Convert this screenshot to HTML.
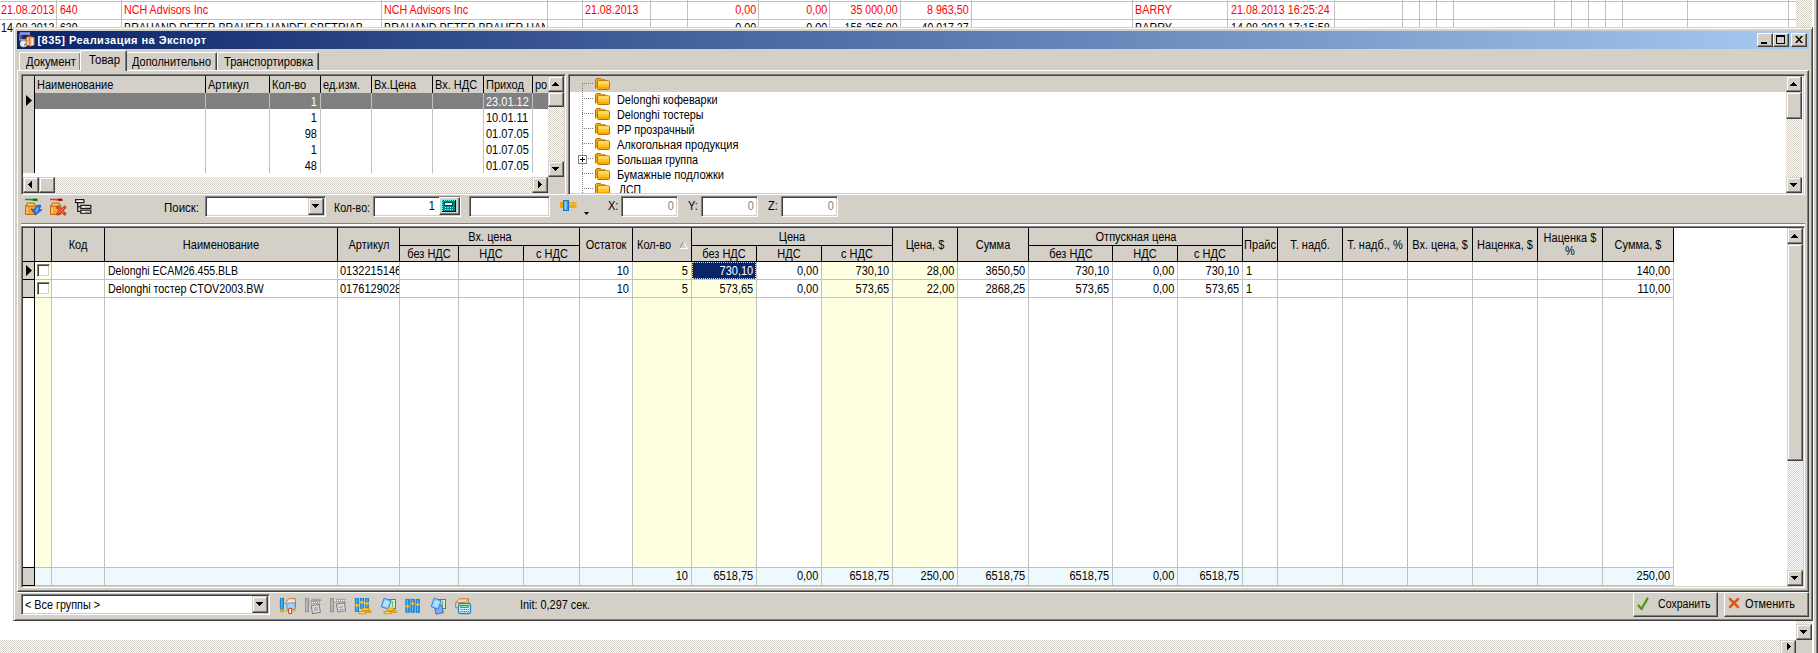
<!DOCTYPE html>
<html lang="ru"><head><meta charset="utf-8"><title>[835] Реализация на Экспорт</title>
<style>
html,body{margin:0;padding:0}
body{width:1818px;height:653px;overflow:hidden;background:#fff;position:relative;font-family:"Liberation Sans",sans-serif;font-size:11px;color:#000}
div{position:absolute;box-sizing:border-box}
svg{position:absolute;overflow:visible}
.t{white-space:nowrap;font-size:12.5px;line-height:12px;height:12px}
.chk{background:repeating-conic-gradient(#fff 0% 25%,#d4d0c8 0% 50%) 0 0/2px 2px}
.face{background:#d4d0c8}
.sunk{border:1px solid;border-color:#808080 #fff #fff #808080;box-shadow:inset 1px 1px 0 #404040,inset -1px -1px 0 #d4d0c8}
.btn{background:#d4d0c8;border:1px solid;border-color:#fff #404040 #404040 #fff;box-shadow:inset -1px -1px 0 #808080,inset 1px 1px 0 #d4d0c8}
.sbtn{background:#d4d0c8;border:1px solid;border-color:#d4d0c8 #404040 #404040 #d4d0c8;box-shadow:inset -1px -1px 0 #808080,inset 1px 1px 0 #fff}
.hd{background:#d4d0c8;border-right:1px solid #000}
.clip{overflow:hidden}
</style></head><body>

<div style="left:0px;top:1px;width:1796px;height:1px;background:#c0c0c0"></div>
<div style="left:0px;top:19px;width:1796px;height:1px;background:#c0c0c0"></div>
<div style="left:56px;top:0px;width:1px;height:28px;background:#c0c0c0"></div>
<div style="left:121px;top:0px;width:1px;height:28px;background:#c0c0c0"></div>
<div style="left:381px;top:0px;width:1px;height:28px;background:#c0c0c0"></div>
<div style="left:547px;top:0px;width:1px;height:28px;background:#c0c0c0"></div>
<div style="left:582px;top:0px;width:1px;height:28px;background:#c0c0c0"></div>
<div style="left:650px;top:0px;width:1px;height:28px;background:#c0c0c0"></div>
<div style="left:687px;top:0px;width:1px;height:28px;background:#c0c0c0"></div>
<div style="left:758px;top:0px;width:1px;height:28px;background:#c0c0c0"></div>
<div style="left:829px;top:0px;width:1px;height:28px;background:#c0c0c0"></div>
<div style="left:900px;top:0px;width:1px;height:28px;background:#c0c0c0"></div>
<div style="left:971px;top:0px;width:1px;height:28px;background:#c0c0c0"></div>
<div style="left:1132px;top:0px;width:1px;height:28px;background:#c0c0c0"></div>
<div style="left:1227px;top:0px;width:1px;height:28px;background:#c0c0c0"></div>
<div style="left:1334px;top:0px;width:1px;height:28px;background:#c0c0c0"></div>
<div style="left:1402px;top:0px;width:1px;height:28px;background:#c0c0c0"></div>
<div style="left:1419px;top:0px;width:1px;height:28px;background:#c0c0c0"></div>
<div style="left:1436px;top:0px;width:1px;height:28px;background:#c0c0c0"></div>
<div style="left:1453px;top:0px;width:1px;height:28px;background:#c0c0c0"></div>
<div style="left:1554px;top:0px;width:1px;height:28px;background:#c0c0c0"></div>
<div style="left:1571px;top:0px;width:1px;height:28px;background:#c0c0c0"></div>
<div style="left:1588px;top:0px;width:1px;height:28px;background:#c0c0c0"></div>
<div style="left:1605px;top:0px;width:1px;height:28px;background:#c0c0c0"></div>
<div style="left:1622px;top:0px;width:1px;height:28px;background:#c0c0c0"></div>
<div style="left:1687px;top:0px;width:1px;height:28px;background:#c0c0c0"></div>
<div style="left:1788px;top:0px;width:1px;height:28px;background:#c0c0c0"></div>
<div class="t" style="font-size:12.5px;line-height:15px;height:15px;top:3px;transform:scaleX(0.8552);color:#ff0000;left:0.5px;transform-origin:0 0;">21.08.2013</div>
<div class="t" style="font-size:12.5px;line-height:15px;height:15px;top:3px;transform:scaleX(0.8440);color:#ff0000;left:59.5px;transform-origin:0 0;">640</div>
<div class="t" style="font-size:12.5px;line-height:15px;height:15px;top:3px;transform:scaleX(0.8576);color:#ff0000;left:124px;transform-origin:0 0;">NCH Advisors Inc</div>
<div class="t" style="font-size:12.5px;line-height:15px;height:15px;top:3px;transform:scaleX(0.8576);color:#ff0000;left:384px;transform-origin:0 0;">NCH Advisors Inc</div>
<div class="t" style="font-size:12.5px;line-height:15px;height:15px;top:3px;transform:scaleX(0.8552);color:#ff0000;left:585px;transform-origin:0 0;">21.08.2013</div>
<div class="t" style="font-size:12.5px;line-height:15px;height:15px;top:3px;transform:scaleX(0.8632);color:#ff0000;right:1062px;transform-origin:100% 0;">0,00</div>
<div class="t" style="font-size:12.5px;line-height:15px;height:15px;top:3px;transform:scaleX(0.8632);color:#ff0000;right:991px;transform-origin:100% 0;">0,00</div>
<div class="t" style="font-size:12.5px;line-height:15px;height:15px;top:3px;transform:scaleX(0.8452);color:#ff0000;right:920.5px;transform-origin:100% 0;">35 000,00</div>
<div class="t" style="font-size:12.5px;line-height:15px;height:15px;top:3px;transform:scaleX(0.8571);color:#ff0000;right:849.5px;transform-origin:100% 0;">8 963,50</div>
<div class="t" style="font-size:12.5px;line-height:15px;height:15px;top:3px;transform:scaleX(0.8636);color:#ff0000;left:1135px;transform-origin:0 0;">BARRY</div>
<div class="t" style="font-size:12.5px;line-height:15px;height:15px;top:3px;transform:scaleX(0.8606);color:#ff0000;left:1230.5px;transform-origin:0 0;">21.08.2013 16:25:24</div>
<div class="clip" style="left:0;top:20px;width:1796px;height:20px">
<div class="t" style="font-size:12.5px;line-height:15px;height:15px;top:1px;transform:scaleX(0.8552);left:0.5px;transform-origin:0 0;">14.08.2013</div>
<div class="t" style="font-size:12.5px;line-height:15px;height:15px;top:1px;transform:scaleX(0.8440);left:59.5px;transform-origin:0 0;">639</div>
<div class="clip" style="left:124px;top:0;width:256px;height:20px">
<div class="t" style="font-size:12.5px;line-height:15px;height:15px;top:1px;transform:scaleX(0.8602);left:0px;transform-origin:0 0;">BRAHAND PETER BRAHER HANDELSBETRIAB</div>
</div>
<div class="clip" style="left:384px;top:0;width:161px;height:20px">
<div class="t" style="font-size:12.5px;line-height:15px;height:15px;top:1px;transform:scaleX(0.8602);left:0px;transform-origin:0 0;">BRAHAND PETER BRAHER HANDELSBETRIAB</div>
</div>
<div class="t" style="font-size:12.5px;line-height:15px;height:15px;top:1px;transform:scaleX(0.8632);right:1040px;transform-origin:100% 0;">0,00</div>
<div class="t" style="font-size:12.5px;line-height:15px;height:15px;top:1px;transform:scaleX(0.8632);right:969px;transform-origin:100% 0;">0,00</div>
<div class="t" style="font-size:12.5px;line-height:15px;height:15px;top:1px;transform:scaleX(0.8472);right:898.5px;transform-origin:100% 0;">156 256,00</div>
<div class="t" style="font-size:12.5px;line-height:15px;height:15px;top:1px;transform:scaleX(0.8452);right:827.5px;transform-origin:100% 0;">40 017,27</div>
<div class="t" style="font-size:12.5px;line-height:15px;height:15px;top:1px;transform:scaleX(0.8636);left:1135px;transform-origin:0 0;">BARRY</div>
<div class="t" style="font-size:12.5px;line-height:15px;height:15px;top:1px;transform:scaleX(0.8606);left:1230.5px;transform-origin:0 0;">14.08.2013 17:15:58</div>
</div>
<div class="chk" style="left:1796px;top:0px;width:16px;height:640px;"></div>
<div class="sbtn" style="left:1796px;top:624px;width:16px;height:16px;"></div>
<svg style="left:1800px;top:630px" width="7" height="4"><path d="M0 0h7v1h-1v1h-1v1h-1v1h-1v-1h-1v-1h-1v-1h-1z" fill="#000" shape-rendering="crispEdges"/></svg>
<div class="chk" style="left:0px;top:640px;width:1796px;height:13px;"></div>
<div class="sbtn" style="left:1780px;top:640px;width:16px;height:16px;"></div>
<svg style="left:1787px;top:643px" width="4" height="7"><path d="M0 0h1v1h1v1h1v1h1v1h-1v1h-1v1h-1v1h-1z" fill="#000" shape-rendering="crispEdges"/></svg>
<div class="face" style="left:1796px;top:640px;width:16px;height:13px;"></div>
<div style="left:1812px;top:0px;width:2px;height:653px;background:#fff"></div>
<div style="left:1814px;top:0px;width:2px;height:653px;background:#d4d0c8"></div>
<div style="left:1816px;top:0px;width:1px;height:653px;background:#808080"></div>
<div style="left:1817px;top:0px;width:1px;height:653px;background:#404040"></div>
<div style="left:13px;top:27px;width:1800px;height:594px;background:#d4d0c8;border:1px solid;border-color:#d4d0c8 #404040 #404040 #d4d0c8;box-shadow:inset 1px 1px 0 #fff,inset -1px -1px 0 #808080"></div>
<div style="left:17px;top:31px;width:1792px;height:18px;background:linear-gradient(90deg,#0a246a,#a6caf0)"></div>
<svg style="left:19px;top:32px" width="16" height="16" viewBox="0 0 16 16"><rect x=".5" y="2.500" width="9.500" height="6" fill="#14246c" stroke="#7c8498" stroke-width=".8"/><rect x=".8" y=".2" width="10.200" height="2.500" fill="#8896f0"/><rect x="7.200" y=".8" width="1.400" height="1.200" fill="#58d060"/><path d="M1.300 3v5M2.800 3v5" stroke="#70788c" stroke-width=".8"/><path d="M.5 7.600h7" stroke="#d8a0a8" stroke-width=".9"/><ellipse cx="4.600" cy="11.800" rx="3.600" ry="3.300" fill="#e8eaee" stroke="#a8acb8" stroke-width=".6"/><path d="M3 10.500l1.200 2.800M5.500 13.500l1.800-1.800" stroke="#fff" stroke-width="1"/><path d="M5.200 13.200l2-1.600" stroke="#3a6cd8" stroke-width="1.100"/><path d="M7.200 5.300L11 4.200l4.200 1.100V13L11 14.300 7.200 13z" fill="#ee8c34" stroke="#b85e10" stroke-width=".5"/><path d="M11 4.200v10.100" stroke="#c06818" stroke-width=".5"/><path d="M11.200 5.200l4 .9V13l-4 1.200z" fill="#f6a860"/><path d="M8.900 6v6.800" stroke="#fff" stroke-width="1.200"/><path d="M13.200 6.200v6.800" stroke="#fff4e4" stroke-width="1.600"/><path d="M9 7.500v3" stroke="#8088a8" stroke-width=".8"/></svg>
<div class="t" style="top:33.5px;color:#fff;font-size:11px;line-height:13px;height:13px;font-weight:bold;letter-spacing:0.457px;left:37.5px;">[835] Реализация на Экспорт</div>
<div class="btn" style="left:1757px;top:33px;width:16px;height:14px;"></div>
<div class="btn" style="left:1773px;top:33px;width:16px;height:14px;"></div>
<div class="btn" style="left:1791px;top:33px;width:16px;height:14px;"></div>
<div style="left:1761px;top:42px;width:6px;height:2px;background:#000"></div>
<div style="left:1776px;top:35px;width:9px;height:9px;border:1px solid #000;border-top-width:2px"></div>
<svg style="left:1795px;top:36px" width="8" height="7"><path d="M0 0h2l2 2.5L6 0h2L5 3.5 8 7H6L4 4.5 2 7H0l3-3.5z" fill="#000"/></svg>
<div style="left:17px;top:70px;width:1792px;height:522px;background:#d4d0c8;border:1px solid;border-color:#fff #404040 #404040 #fff;box-shadow:inset -1px -1px 0 #808080"></div>
<div style="left:19px;top:52px;width:62px;height:18px;background:#d4d0c8;border:1px solid;border-color:#fff #404040 #d4d0c8 #fff;border-bottom:0;border-radius:2px 2px 0 0;box-shadow:inset -1px 0 0 #808080"></div>
<div class="t" style="top:56px;transform:scaleX(0.9017);left:26px;transform-origin:0 0;">Документ</div>
<div style="left:125px;top:52px;width:92px;height:18px;background:#d4d0c8;border:1px solid;border-color:#fff #404040 #d4d0c8 #fff;border-bottom:0;border-radius:2px 2px 0 0;box-shadow:inset -1px 0 0 #808080"></div>
<div class="t" style="top:56px;transform:scaleX(0.8781);left:132px;transform-origin:0 0;">Дополнительно</div>
<div style="left:217px;top:52px;width:102px;height:18px;background:#d4d0c8;border:1px solid;border-color:#fff #404040 #d4d0c8 #fff;border-bottom:0;border-radius:2px 2px 0 0;box-shadow:inset -1px 0 0 #808080"></div>
<div class="t" style="top:56px;transform:scaleX(0.8900);left:224px;transform-origin:0 0;">Транспортировка</div>
<div style="left:80px;top:50px;width:47px;height:21px;background:#d4d0c8;border:1px solid;border-color:#fff #404040 #d4d0c8 #fff;border-bottom:0;border-radius:2px 2px 0 0;box-shadow:inset -1px 0 0 #808080"></div>
<div class="t" style="top:54px;transform:scaleX(0.9114);left:89px;transform-origin:0 0;">Товар</div>
<div class="sunk" style="left:21px;top:74px;width:545px;height:121px;background:#fff"></div>
<div style="left:23px;top:76px;width:525px;height:17px;background:#d4d0c8"></div>
<div style="left:34px;top:76px;width:1px;height:17px;background:#000"></div>
<div style="left:34px;top:93px;width:1px;height:80px;background:#c0c0c0"></div>
<div style="left:205px;top:76px;width:1px;height:17px;background:#000"></div>
<div style="left:205px;top:93px;width:1px;height:80px;background:#c0c0c0"></div>
<div style="left:269px;top:76px;width:1px;height:17px;background:#000"></div>
<div style="left:269px;top:93px;width:1px;height:80px;background:#c0c0c0"></div>
<div style="left:320px;top:76px;width:1px;height:17px;background:#000"></div>
<div style="left:320px;top:93px;width:1px;height:80px;background:#c0c0c0"></div>
<div style="left:371px;top:76px;width:1px;height:17px;background:#000"></div>
<div style="left:371px;top:93px;width:1px;height:80px;background:#c0c0c0"></div>
<div style="left:432px;top:76px;width:1px;height:17px;background:#000"></div>
<div style="left:432px;top:93px;width:1px;height:80px;background:#c0c0c0"></div>
<div style="left:483px;top:76px;width:1px;height:17px;background:#000"></div>
<div style="left:483px;top:93px;width:1px;height:80px;background:#c0c0c0"></div>
<div style="left:532px;top:76px;width:1px;height:17px;background:#000"></div>
<div style="left:532px;top:93px;width:1px;height:80px;background:#c0c0c0"></div>
<div style="left:23px;top:93px;width:11px;height:80px;background:#d4d0c8"></div>
<div style="left:34px;top:93px;width:1px;height:80px;background:#000"></div>
<div class="t" style="top:79px;transform:scaleX(0.8800);left:37px;transform-origin:0 0;">Наименование</div>
<div class="t" style="top:79px;transform:scaleX(0.8800);left:208px;transform-origin:0 0;">Артикул</div>
<div class="t" style="top:79px;transform:scaleX(0.8800);left:272px;transform-origin:0 0;">Кол-во</div>
<div class="t" style="top:79px;transform:scaleX(0.8800);left:323px;transform-origin:0 0;">ед.изм.</div>
<div class="t" style="top:79px;transform:scaleX(0.8800);left:374px;transform-origin:0 0;">Вх.Цена</div>
<div class="t" style="top:79px;transform:scaleX(0.8800);left:435px;transform-origin:0 0;">Вх. НДС</div>
<div class="t" style="top:79px;transform:scaleX(0.8800);left:486px;transform-origin:0 0;">Приход</div>
<div class="t" style="top:79px;transform:scaleX(0.8800);left:535px;transform-origin:0 0;">ро</div>
<div style="left:35px;top:93px;width:513px;height:16px;background:#808080"></div>
<div style="left:205px;top:93px;width:1px;height:16px;background:#c0c0c0"></div>
<div style="left:269px;top:93px;width:1px;height:16px;background:#c0c0c0"></div>
<div style="left:320px;top:93px;width:1px;height:16px;background:#c0c0c0"></div>
<div style="left:371px;top:93px;width:1px;height:16px;background:#c0c0c0"></div>
<div style="left:432px;top:93px;width:1px;height:16px;background:#c0c0c0"></div>
<div style="left:483px;top:93px;width:1px;height:16px;background:#c0c0c0"></div>
<div style="left:532px;top:93px;width:1px;height:16px;background:#c0c0c0"></div>
<svg style="left:26px;top:95px" width="6" height="11"><path d="M0 0v11L6 5.5z" fill="#000"/></svg>
<div class="t" style="top:96px;color:#fff;transform:scaleX(0.8800);right:1501.5px;transform-origin:100% 0;">1</div>
<div class="t" style="top:96px;color:#fff;transform:scaleX(0.8800);left:486px;transform-origin:0 0;">23.01.12</div>
<div class="t" style="top:112px;transform:scaleX(0.8800);right:1501.5px;transform-origin:100% 0;">1</div>
<div class="t" style="top:112px;transform:scaleX(0.8800);left:486px;transform-origin:0 0;">10.01.11</div>
<div class="t" style="top:128px;transform:scaleX(0.8800);right:1501.5px;transform-origin:100% 0;">98</div>
<div class="t" style="top:128px;transform:scaleX(0.8800);left:486px;transform-origin:0 0;">01.07.05</div>
<div class="t" style="top:144px;transform:scaleX(0.8800);right:1501.5px;transform-origin:100% 0;">1</div>
<div class="t" style="top:144px;transform:scaleX(0.8800);left:486px;transform-origin:0 0;">01.07.05</div>
<div class="t" style="top:160px;transform:scaleX(0.8800);right:1501.5px;transform-origin:100% 0;">48</div>
<div class="t" style="top:160px;transform:scaleX(0.8800);left:486px;transform-origin:0 0;">01.07.05</div>
<div class="chk" style="left:548px;top:76px;width:16px;height:101px;"></div>
<div class="sbtn" style="left:548px;top:76px;width:16px;height:16px;"></div>
<svg style="left:552px;top:82px" width="7" height="4"><path d="M3 0h1v1h1v1h1v1h1v1h-7v-1h1v-1h1v-1h1z" fill="#000" shape-rendering="crispEdges"/></svg>
<div class="sbtn" style="left:548px;top:92px;width:16px;height:15px;"></div>
<div class="sbtn" style="left:548px;top:161px;width:16px;height:16px;"></div>
<svg style="left:552px;top:167px" width="7" height="4"><path d="M0 0h7v1h-1v1h-1v1h-1v1h-1v-1h-1v-1h-1v-1h-1z" fill="#000" shape-rendering="crispEdges"/></svg>
<div class="chk" style="left:23px;top:177px;width:525px;height:16px;"></div>
<div class="sbtn" style="left:23px;top:177px;width:16px;height:16px;"></div>
<svg style="left:28px;top:181px" width="4" height="7"><path d="M3 0h1v7h-1v-1h-1v-1h-1v-1h-1v-1h1v-1h1v-1h1z" fill="#000" shape-rendering="crispEdges"/></svg>
<div class="sbtn" style="left:39px;top:177px;width:16px;height:16px;"></div>
<div class="sbtn" style="left:532px;top:177px;width:16px;height:16px;"></div>
<svg style="left:538px;top:181px" width="4" height="7"><path d="M0 0h1v1h1v1h1v1h1v1h-1v1h-1v1h-1v1h-1z" fill="#000" shape-rendering="crispEdges"/></svg>
<div class="face" style="left:548px;top:177px;width:16px;height:16px;"></div>
<div class="sunk" style="left:568px;top:74px;width:1237px;height:121px;background:#fff"></div>
<div style="left:570px;top:76px;width:1217px;height:16px;background:#d4d0c8"></div>
<div class="clip" style="left:570px;top:76px;width:1217px;height:117px">
<div style="left:12px;top:7px;width:11px;height:1px;border-top:1px dotted #808080"></div>
<svg style="left:25px;top:2px" width="15" height="12" viewBox="0 0 15 12"><path d="M.5 10.500V1.500l1-1h4l1.200 1.300h3.300v2" fill="#f0a818" stroke="#b87400"/><rect x="2.500" y="2.800" width="12" height="8.700" rx="1" fill="#ffc420" stroke="#b87400"/><rect x="3" y="3.300" width="11" height="3" fill="#ffd45c"/><rect x="3" y="9" width="11" height="2" fill="#f6aa08"/><path d="M3.500 4h10" stroke="#ffe490" stroke-width=".8"/></svg>
<div style="left:12px;top:22px;width:11px;height:1px;border-top:1px dotted #808080"></div>
<svg style="left:25px;top:17px" width="15" height="12" viewBox="0 0 15 12"><path d="M.5 10.500V1.500l1-1h4l1.200 1.300h3.300v2" fill="#f0a818" stroke="#b87400"/><rect x="2.500" y="2.800" width="12" height="8.700" rx="1" fill="#ffc420" stroke="#b87400"/><rect x="3" y="3.300" width="11" height="3" fill="#ffd45c"/><rect x="3" y="9" width="11" height="2" fill="#f6aa08"/><path d="M3.500 4h10" stroke="#ffe490" stroke-width=".8"/></svg>
<div class="t" style="left:47px;top:18px;transform-origin:0 0;transform:scaleX(0.8704)">Delonghi кофеварки</div>
<div style="left:12px;top:37px;width:11px;height:1px;border-top:1px dotted #808080"></div>
<svg style="left:25px;top:32px" width="15" height="12" viewBox="0 0 15 12"><path d="M.5 10.500V1.500l1-1h4l1.200 1.300h3.300v2" fill="#f0a818" stroke="#b87400"/><rect x="2.500" y="2.800" width="12" height="8.700" rx="1" fill="#ffc420" stroke="#b87400"/><rect x="3" y="3.300" width="11" height="3" fill="#ffd45c"/><rect x="3" y="9" width="11" height="2" fill="#f6aa08"/><path d="M3.500 4h10" stroke="#ffe490" stroke-width=".8"/></svg>
<div class="t" style="left:47px;top:33px;transform-origin:0 0;transform:scaleX(0.8644)">Delonghi тостеры</div>
<div style="left:12px;top:52px;width:11px;height:1px;border-top:1px dotted #808080"></div>
<svg style="left:25px;top:47px" width="15" height="12" viewBox="0 0 15 12"><path d="M.5 10.500V1.500l1-1h4l1.200 1.300h3.300v2" fill="#f0a818" stroke="#b87400"/><rect x="2.500" y="2.800" width="12" height="8.700" rx="1" fill="#ffc420" stroke="#b87400"/><rect x="3" y="3.300" width="11" height="3" fill="#ffd45c"/><rect x="3" y="9" width="11" height="2" fill="#f6aa08"/><path d="M3.500 4h10" stroke="#ffe490" stroke-width=".8"/></svg>
<div class="t" style="left:47px;top:48px;transform-origin:0 0;transform:scaleX(0.8700)">PP прозрачный</div>
<div style="left:12px;top:67px;width:11px;height:1px;border-top:1px dotted #808080"></div>
<svg style="left:25px;top:62px" width="15" height="12" viewBox="0 0 15 12"><path d="M.5 10.500V1.500l1-1h4l1.200 1.300h3.300v2" fill="#f0a818" stroke="#b87400"/><rect x="2.500" y="2.800" width="12" height="8.700" rx="1" fill="#ffc420" stroke="#b87400"/><rect x="3" y="3.300" width="11" height="3" fill="#ffd45c"/><rect x="3" y="9" width="11" height="2" fill="#f6aa08"/><path d="M3.500 4h10" stroke="#ffe490" stroke-width=".8"/></svg>
<div class="t" style="left:47px;top:63px;transform-origin:0 0;transform:scaleX(0.8837)">Алкогольная продукция</div>
<div style="left:12px;top:82px;width:11px;height:1px;border-top:1px dotted #808080"></div>
<svg style="left:25px;top:77px" width="15" height="12" viewBox="0 0 15 12"><path d="M.5 10.500V1.500l1-1h4l1.200 1.300h3.300v2" fill="#f0a818" stroke="#b87400"/><rect x="2.500" y="2.800" width="12" height="8.700" rx="1" fill="#ffc420" stroke="#b87400"/><rect x="3" y="3.300" width="11" height="3" fill="#ffd45c"/><rect x="3" y="9" width="11" height="2" fill="#f6aa08"/><path d="M3.500 4h10" stroke="#ffe490" stroke-width=".8"/></svg>
<div class="t" style="left:47px;top:78px;transform-origin:0 0;transform:scaleX(0.8616)">Большая группа</div>
<div style="left:12px;top:97px;width:11px;height:1px;border-top:1px dotted #808080"></div>
<svg style="left:25px;top:92px" width="15" height="12" viewBox="0 0 15 12"><path d="M.5 10.500V1.500l1-1h4l1.200 1.300h3.300v2" fill="#f0a818" stroke="#b87400"/><rect x="2.500" y="2.800" width="12" height="8.700" rx="1" fill="#ffc420" stroke="#b87400"/><rect x="3" y="3.300" width="11" height="3" fill="#ffd45c"/><rect x="3" y="9" width="11" height="2" fill="#f6aa08"/><path d="M3.500 4h10" stroke="#ffe490" stroke-width=".8"/></svg>
<div class="t" style="left:47px;top:93px;transform-origin:0 0;transform:scaleX(0.8913)">Бумажные подложки</div>
<div style="left:12px;top:112px;width:11px;height:1px;border-top:1px dotted #808080"></div>
<svg style="left:25px;top:107px" width="15" height="12" viewBox="0 0 15 12"><path d="M.5 10.500V1.500l1-1h4l1.200 1.300h3.300v2" fill="#f0a818" stroke="#b87400"/><rect x="2.500" y="2.800" width="12" height="8.700" rx="1" fill="#ffc420" stroke="#b87400"/><rect x="3" y="3.300" width="11" height="3" fill="#ffd45c"/><rect x="3" y="9" width="11" height="2" fill="#f6aa08"/><path d="M3.500 4h10" stroke="#ffe490" stroke-width=".8"/></svg>
<div class="t" style="left:49px;top:108px;transform-origin:0 0;transform:scaleX(0.8309)">ДСП</div>
<div style="left:12px;top:7px;width:1px;height:112px;border-left:1px dotted #808080"></div>
<div style="left:8px;top:79px;width:9px;height:9px;background:#fff;border:1px solid #808080"></div>
<div style="left:10px;top:83px;width:5px;height:1px;background:#000"></div><div style="left:12px;top:81px;width:1px;height:5px;background:#000"></div>
</div>
<div class="chk" style="left:1786px;top:76px;width:16px;height:117px;"></div>
<div class="sbtn" style="left:1786px;top:76px;width:16px;height:16px;"></div>
<svg style="left:1790px;top:82px" width="7" height="4"><path d="M3 0h1v1h1v1h1v1h1v1h-7v-1h1v-1h1v-1h1z" fill="#000" shape-rendering="crispEdges"/></svg>
<div class="sbtn" style="left:1786px;top:92px;width:16px;height:27px;"></div>
<div class="sbtn" style="left:1786px;top:177px;width:16px;height:16px;"></div>
<svg style="left:1790px;top:183px" width="7" height="4"><path d="M0 0h7v1h-1v1h-1v1h-1v1h-1v-1h-1v-1h-1v-1h-1z" fill="#000" shape-rendering="crispEdges"/></svg>
<div class="t" style="top:202px;transform:scaleX(0.9184);left:164px;transform-origin:0 0;">Поиск:</div>
<div class="sunk" style="left:205px;top:196px;width:121px;height:21px;background:#fff"></div>
<div class="sbtn" style="left:308px;top:198px;width:16px;height:17px;"></div>
<svg style="left:312px;top:204px" width="7" height="4"><path d="M0 0h7v1h-1v1h-1v1h-1v1h-1v-1h-1v-1h-1v-1h-1z" fill="#000" shape-rendering="crispEdges"/></svg>
<div class="t" style="top:202px;transform:scaleX(0.8503);left:334px;transform-origin:0 0;">Кол-во:</div>
<div class="sunk" style="left:373px;top:196px;width:88px;height:21px;background:#fff"></div>
<div class="t" style="top:200px;transform:scaleX(0.8800);right:1383.5px;transform-origin:100% 0;">1</div>
<div class="btn" style="left:439px;top:197px;width:21px;height:18px;"></div>
<svg style="left:442px;top:200px" width="14" height="12" viewBox="0 0 14 12"><rect x="0" y="0" width="14" height="12" fill="#000070"/><rect x="0" y="0" width="13" height="11" fill="#008888"/><path d="M.5 11V.5H13" fill="none" stroke="#40ffff" stroke-width="1" stroke-dasharray="1 1"/><rect x="2.500" y="2.500" width="8" height="3" fill="#fff" stroke="#004848" stroke-width="1"/><path d="M3 7.500h8M3 9.500h8" stroke="#fff" stroke-width="1" stroke-dasharray="1 1.500"/></svg>
<div class="sunk" style="left:469px;top:196px;width:81px;height:21px;background:#fff"></div>
<svg style="left:560px;top:200px" width="17" height="11" viewBox="0 0 17 11"><rect x="0" y="2" width="3" height="6" fill="#f0a010"/><rect x="9" y="2" width="7.500" height="6" fill="#f0a818"/><rect x="10" y="3" width="5.500" height="2" fill="#f8d070"/><path d="M12 3v2M14 3v2" stroke="#c07800" stroke-width=".7"/><rect x="3.400" y=".4" width="5.200" height="10.200" fill="#2a9cea" stroke="#1466b8" stroke-width=".8"/><rect x="4.600" y="1.200" width="1.800" height="8.600" fill="#8fd6fa"/></svg>
<svg style="left:584px;top:212px" width="5" height="3"><path d="M0 0h5L2.5 3z" fill="#000"/></svg>
<div class="t" style="top:200px;transform:scaleX(0.8800);left:608px;transform-origin:0 0;">X:</div>
<div class="sunk" style="left:621px;top:196px;width:57px;height:21px;background:#fff"></div>
<div class="t" style="top:200px;color:#808080;transform:scaleX(0.8800);right:1144px;transform-origin:100% 0;">0</div>
<div class="t" style="top:200px;transform:scaleX(0.8800);left:688px;transform-origin:0 0;">Y:</div>
<div class="sunk" style="left:701px;top:196px;width:57px;height:21px;background:#fff"></div>
<div class="t" style="top:200px;color:#808080;transform:scaleX(0.8800);right:1064px;transform-origin:100% 0;">0</div>
<div class="t" style="top:200px;transform:scaleX(0.8800);left:768px;transform-origin:0 0;">Z:</div>
<div class="sunk" style="left:781px;top:196px;width:57px;height:21px;background:#fff"></div>
<div class="t" style="top:200px;color:#808080;transform:scaleX(0.8800);right:984px;transform-origin:100% 0;">0</div>
<svg style="left:24px;top:198px" width="18" height="18" viewBox="0 0 18 18"><path d="M1 .800h12.300v2.200L4.500 2.300H1z" fill="#169a16"/><path d="M13.300 .800v2.200L9 2.600V.800z" fill="#0a6a0a"/><path d="M1.500 8L3.500 5h6.500l2 3v8.500h-10.500z" fill="#f2a434" stroke="#c46c08" stroke-width="1"/><path d="M1.500 8h10.500" stroke="#c46c08" stroke-width=".8"/><path d="M3 9.500v6" stroke="#f9cf8c" stroke-width="1.200"/><path d="M4 6.500h5.500" stroke="#fbd9a0" stroke-width="1"/><path d="M13.500 7L17 7.500l-1.800 4 2.800.3L11.500 17 7 11l3.300.8z" fill="#2f6fe4" stroke="#1a48b4" stroke-width=".7"/><path d="M13.800 9.500l-1.600 4.500" stroke="#5ad0ff" stroke-width="1.600"/></svg>
<svg style="left:49px;top:198px" width="18" height="18" viewBox="0 0 18 18"><path d="M1 .800h12.300v2.200L4.500 2.300H1z" fill="#e03818"/><path d="M13.300 .800v2.200L9 2.600V.800z" fill="#8a1008"/><path d="M1.500 8L3.500 5h6.500l2 3v8.500h-10.500z" fill="#f2a434" stroke="#c46c08" stroke-width="1"/><path d="M1.500 8h10.500" stroke="#c46c08" stroke-width=".8"/><path d="M3 9.500v6" stroke="#f9cf8c" stroke-width="1.200"/><path d="M4 6.500h5.500" stroke="#fbd9a0" stroke-width="1"/><path d="M8.800 9.300l7 6.500M15.800 9.300l-7 6.500" stroke="#d43a22" stroke-width="3.200" stroke-linecap="round"/><path d="M9.300 9.800l6 5.500M15.300 9.800l-6 5.500" stroke="#f28a6a" stroke-width="1"/></svg>
<svg style="left:75px;top:199px" width="17" height="16" viewBox="0 0 17 16" fill="none" stroke="#1c1c1c" stroke-width="1.200"><rect x=".6" y=".6" width="8.300" height="3" fill="#fff"/><path d="M2.700 4v8.500h3M2.700 7.700h3"/><rect x="5.800" y="6.400" width="10" height="3" fill="#d8d8d8"/><rect x="5.800" y="11.200" width="10" height="3" fill="#d8d8d8"/><path d="M7 7.900h3M7 12.700h3" stroke="#fff" stroke-width="1.400"/></svg>
<div style="left:21px;top:223px;width:1784px;height:1px;background:#808080"></div>
<div style="left:21px;top:224px;width:1784px;height:2px;background:#fff"></div>
<div class="sunk" style="left:21px;top:226px;width:1784px;height:362px;background:#fff"></div>
<div style="left:35px;top:262px;width:16px;height:305px;background:#ffffe1"></div>
<div style="left:633px;top:262px;width:58px;height:305px;background:#ffffe1"></div>
<div style="left:692px;top:262px;width:64px;height:305px;background:#ffffe1"></div>
<div style="left:822px;top:262px;width:70px;height:305px;background:#ffffe1"></div>
<div style="left:893px;top:262px;width:64px;height:305px;background:#ffffe1"></div>
<div style="left:35px;top:568px;width:1638px;height:17px;background:#eef9fd"></div>
<div style="left:35px;top:585px;width:1639px;height:1px;background:#c0c0c0"></div>
<div style="left:51px;top:262px;width:1px;height:324px;background:#c0c0c0"></div>
<div style="left:104px;top:262px;width:1px;height:324px;background:#c0c0c0"></div>
<div style="left:337px;top:262px;width:1px;height:324px;background:#c0c0c0"></div>
<div style="left:399px;top:262px;width:1px;height:324px;background:#c0c0c0"></div>
<div style="left:458px;top:262px;width:1px;height:324px;background:#c0c0c0"></div>
<div style="left:523px;top:262px;width:1px;height:324px;background:#c0c0c0"></div>
<div style="left:579px;top:262px;width:1px;height:324px;background:#c0c0c0"></div>
<div style="left:632px;top:262px;width:1px;height:324px;background:#c0c0c0"></div>
<div style="left:691px;top:262px;width:1px;height:324px;background:#c0c0c0"></div>
<div style="left:756px;top:262px;width:1px;height:324px;background:#c0c0c0"></div>
<div style="left:821px;top:262px;width:1px;height:324px;background:#c0c0c0"></div>
<div style="left:892px;top:262px;width:1px;height:324px;background:#c0c0c0"></div>
<div style="left:957px;top:262px;width:1px;height:324px;background:#c0c0c0"></div>
<div style="left:1028px;top:262px;width:1px;height:324px;background:#c0c0c0"></div>
<div style="left:1112px;top:262px;width:1px;height:324px;background:#c0c0c0"></div>
<div style="left:1177px;top:262px;width:1px;height:324px;background:#c0c0c0"></div>
<div style="left:1242px;top:262px;width:1px;height:324px;background:#c0c0c0"></div>
<div style="left:1277px;top:262px;width:1px;height:324px;background:#c0c0c0"></div>
<div style="left:1342px;top:262px;width:1px;height:324px;background:#c0c0c0"></div>
<div style="left:1407px;top:262px;width:1px;height:324px;background:#c0c0c0"></div>
<div style="left:1472px;top:262px;width:1px;height:324px;background:#c0c0c0"></div>
<div style="left:1537px;top:262px;width:1px;height:324px;background:#c0c0c0"></div>
<div style="left:1602px;top:262px;width:1px;height:324px;background:#c0c0c0"></div>
<div style="left:1673px;top:262px;width:1px;height:324px;background:#c0c0c0"></div>
<div style="left:35px;top:279px;width:1639px;height:1px;background:#c0c0c0"></div>
<div style="left:35px;top:297px;width:1639px;height:1px;background:#c0c0c0"></div>
<div style="left:35px;top:567px;width:1639px;height:1px;background:#c0c0c0"></div>
<div style="left:23px;top:262px;width:11px;height:36px;background:#d4d0c8"></div>
<div style="left:23px;top:279px;width:11px;height:1px;background:#000"></div>
<div style="left:23px;top:297px;width:11px;height:1px;background:#000"></div>
<div style="left:34px;top:228px;width:1px;height:358px;background:#000"></div>
<div style="left:23px;top:567px;width:12px;height:19px;background:#d4d0c8;border:1px solid #000;border-left:0"></div>
<svg style="left:26px;top:265px" width="6" height="11"><path d="M0 0v11L6 5.5z" fill="#000"/></svg>
<div style="left:23px;top:228px;width:1651px;height:33px;background:#d4d0c8"></div>
<div style="left:23px;top:261px;width:1651px;height:1px;background:#000"></div>
<div style="left:34px;top:228px;width:1px;height:33px;background:#000"></div>
<div style="left:51px;top:228px;width:1px;height:33px;background:#000"></div>
<div style="left:104px;top:228px;width:1px;height:33px;background:#000"></div>
<div style="left:337px;top:228px;width:1px;height:33px;background:#000"></div>
<div style="left:399px;top:228px;width:1px;height:33px;background:#000"></div>
<div style="left:458px;top:228px;width:1px;height:33px;background:#000"></div>
<div style="left:523px;top:228px;width:1px;height:33px;background:#000"></div>
<div style="left:579px;top:228px;width:1px;height:33px;background:#000"></div>
<div style="left:632px;top:228px;width:1px;height:33px;background:#000"></div>
<div style="left:691px;top:228px;width:1px;height:33px;background:#000"></div>
<div style="left:756px;top:228px;width:1px;height:33px;background:#000"></div>
<div style="left:821px;top:228px;width:1px;height:33px;background:#000"></div>
<div style="left:892px;top:228px;width:1px;height:33px;background:#000"></div>
<div style="left:957px;top:228px;width:1px;height:33px;background:#000"></div>
<div style="left:1028px;top:228px;width:1px;height:33px;background:#000"></div>
<div style="left:1112px;top:228px;width:1px;height:33px;background:#000"></div>
<div style="left:1177px;top:228px;width:1px;height:33px;background:#000"></div>
<div style="left:1242px;top:228px;width:1px;height:33px;background:#000"></div>
<div style="left:1277px;top:228px;width:1px;height:33px;background:#000"></div>
<div style="left:1342px;top:228px;width:1px;height:33px;background:#000"></div>
<div style="left:1407px;top:228px;width:1px;height:33px;background:#000"></div>
<div style="left:1472px;top:228px;width:1px;height:33px;background:#000"></div>
<div style="left:1537px;top:228px;width:1px;height:33px;background:#000"></div>
<div style="left:1602px;top:228px;width:1px;height:33px;background:#000"></div>
<div style="left:1673px;top:228px;width:1px;height:33px;background:#000"></div>
<div style="left:400px;top:228px;width:179px;height:17px;background:#d4d0c8"></div>
<div style="left:400px;top:245px;width:179px;height:1px;background:#000"></div>
<div class="t" style="top:231px;transform:scaleX(0.8800);left:339.5px;width:300px;text-align:center;transform-origin:50% 0;">Вх. цена</div>
<div style="left:692px;top:228px;width:200px;height:17px;background:#d4d0c8"></div>
<div style="left:692px;top:245px;width:200px;height:1px;background:#000"></div>
<div class="t" style="top:231px;transform:scaleX(0.8800);left:642.0px;width:300px;text-align:center;transform-origin:50% 0;">Цена</div>
<div style="left:1029px;top:228px;width:213px;height:17px;background:#d4d0c8"></div>
<div style="left:1029px;top:245px;width:213px;height:1px;background:#000"></div>
<div class="t" style="top:231px;transform:scaleX(0.8800);left:985.5px;width:300px;text-align:center;transform-origin:50% 0;">Отпускная цена</div>
<div class="t" style="top:248px;transform:scaleX(0.8800);left:279.0px;width:300px;text-align:center;transform-origin:50% 0;">без НДС</div>
<div class="t" style="top:248px;transform:scaleX(0.8800);left:341.0px;width:300px;text-align:center;transform-origin:50% 0;">НДС</div>
<div class="t" style="top:248px;transform:scaleX(0.8800);left:401.5px;width:300px;text-align:center;transform-origin:50% 0;">с НДС</div>
<div class="t" style="top:248px;transform:scaleX(0.8800);left:574.0px;width:300px;text-align:center;transform-origin:50% 0;">без НДС</div>
<div class="t" style="top:248px;transform:scaleX(0.8800);left:639.0px;width:300px;text-align:center;transform-origin:50% 0;">НДС</div>
<div class="t" style="top:248px;transform:scaleX(0.8800);left:707.0px;width:300px;text-align:center;transform-origin:50% 0;">с НДС</div>
<div class="t" style="top:248px;transform:scaleX(0.8800);left:920.5px;width:300px;text-align:center;transform-origin:50% 0;">без НДС</div>
<div class="t" style="top:248px;transform:scaleX(0.8800);left:995.0px;width:300px;text-align:center;transform-origin:50% 0;">НДС</div>
<div class="t" style="top:248px;transform:scaleX(0.8800);left:1060.0px;width:300px;text-align:center;transform-origin:50% 0;">с НДС</div>
<div class="t" style="top:239px;transform:scaleX(0.8800);left:-72.0px;width:300px;text-align:center;transform-origin:50% 0;">Код</div>
<div class="t" style="top:239px;transform:scaleX(0.8800);left:71.0px;width:300px;text-align:center;transform-origin:50% 0;">Наименование</div>
<div class="t" style="top:239px;transform:scaleX(0.8800);left:218.5px;width:300px;text-align:center;transform-origin:50% 0;">Артикул</div>
<div class="t" style="top:239px;transform:scaleX(0.8800);left:456.0px;width:300px;text-align:center;transform-origin:50% 0;">Остаток</div>
<div class="t" style="top:239px;transform:scaleX(0.8800);left:775.0px;width:300px;text-align:center;transform-origin:50% 0;">Цена, $</div>
<div class="t" style="top:239px;transform:scaleX(0.8800);left:843.0px;width:300px;text-align:center;transform-origin:50% 0;">Сумма</div>
<div class="t" style="top:239px;transform:scaleX(0.8800);left:1110.0px;width:300px;text-align:center;transform-origin:50% 0;">Прайс</div>
<div class="t" style="top:239px;transform:scaleX(0.8800);left:1160.0px;width:300px;text-align:center;transform-origin:50% 0;">Т. надб.</div>
<div class="t" style="top:239px;transform:scaleX(0.8800);left:1225.0px;width:300px;text-align:center;transform-origin:50% 0;">Т. надб., %</div>
<div class="t" style="top:239px;transform:scaleX(0.8800);left:1290.0px;width:300px;text-align:center;transform-origin:50% 0;">Вх. цена, $</div>
<div class="t" style="top:239px;transform:scaleX(0.8800);left:1355.0px;width:300px;text-align:center;transform-origin:50% 0;">Наценка, $</div>
<div class="t" style="top:239px;transform:scaleX(0.8800);left:1488.0px;width:300px;text-align:center;transform-origin:50% 0;">Сумма, $</div>
<div class="t" style="top:239px;transform:scaleX(0.8800);left:637px;transform-origin:0 0;">Кол-во</div>
<svg style="left:679px;top:241px" width="9" height="8"><path d="M4.5 .5L.5 7.500h8z" fill="#d4d0c8" stroke="#fff"/><path d="M4.500 .5L.5 7.500" stroke="#808080" fill="none"/></svg>
<div class="t" style="top:232px;transform:scaleX(0.8800);left:1420.0px;width:300px;text-align:center;transform-origin:50% 0;">Наценка $</div>
<div class="t" style="top:245px;transform:scaleX(0.8800);left:1420.0px;width:300px;text-align:center;transform-origin:50% 0;">%</div>
<div class="sunk" style="left:37px;top:264px;width:13px;height:13px;background:#fff"></div>
<div class="sunk" style="left:37px;top:282px;width:13px;height:13px;background:#fff"></div>
<div style="left:692px;top:262px;width:64px;height:17px;background:#0a246a;border:1px dotted #f5db95"></div>
<div class="t" style="top:265px;transform:scaleX(0.8428);left:108px;transform-origin:0 0;">Delonghi ECAM26.455.BLB</div>
<div class="clip" style="left:338px;top:265px;width:61px;height:13px;"><div class="t" style="left:2px;top:0;transform-origin:0 0;transform:scaleX(0.8800)">0132215146</div></div>
<div class="t" style="top:265px;transform:scaleX(0.8800);right:1189px;transform-origin:100% 0;">10</div>
<div class="t" style="top:265px;transform:scaleX(0.8800);right:1130px;transform-origin:100% 0;">5</div>
<div class="t" style="top:265px;color:#fff;transform:scaleX(0.8800);right:1065px;transform-origin:100% 0;">730,10</div>
<div class="t" style="top:265px;transform:scaleX(0.8800);right:1000px;transform-origin:100% 0;">0,00</div>
<div class="t" style="top:265px;transform:scaleX(0.8800);right:929px;transform-origin:100% 0;">730,10</div>
<div class="t" style="top:265px;transform:scaleX(0.8800);right:864px;transform-origin:100% 0;">28,00</div>
<div class="t" style="top:265px;transform:scaleX(0.8800);right:793px;transform-origin:100% 0;">3650,50</div>
<div class="t" style="top:265px;transform:scaleX(0.8800);right:709px;transform-origin:100% 0;">730,10</div>
<div class="t" style="top:265px;transform:scaleX(0.8800);right:644px;transform-origin:100% 0;">0,00</div>
<div class="t" style="top:265px;transform:scaleX(0.8800);right:579px;transform-origin:100% 0;">730,10</div>
<div class="t" style="top:265px;transform:scaleX(0.8800);left:1245.5px;transform-origin:0 0;">1</div>
<div class="t" style="top:265px;transform:scaleX(0.8800);right:148px;transform-origin:100% 0;">140,00</div>
<div class="t" style="top:283px;transform:scaleX(0.8622);left:108px;transform-origin:0 0;">Delonghi тостер CTOV2003.BW</div>
<div class="clip" style="left:338px;top:283px;width:61px;height:13px;"><div class="t" style="left:2px;top:0;transform-origin:0 0;transform:scaleX(0.8800)">0176129028</div></div>
<div class="t" style="top:283px;transform:scaleX(0.8800);right:1189px;transform-origin:100% 0;">10</div>
<div class="t" style="top:283px;transform:scaleX(0.8800);right:1130px;transform-origin:100% 0;">5</div>
<div class="t" style="top:283px;transform:scaleX(0.8800);right:1065px;transform-origin:100% 0;">573,65</div>
<div class="t" style="top:283px;transform:scaleX(0.8800);right:1000px;transform-origin:100% 0;">0,00</div>
<div class="t" style="top:283px;transform:scaleX(0.8800);right:929px;transform-origin:100% 0;">573,65</div>
<div class="t" style="top:283px;transform:scaleX(0.8800);right:864px;transform-origin:100% 0;">22,00</div>
<div class="t" style="top:283px;transform:scaleX(0.8800);right:793px;transform-origin:100% 0;">2868,25</div>
<div class="t" style="top:283px;transform:scaleX(0.8800);right:709px;transform-origin:100% 0;">573,65</div>
<div class="t" style="top:283px;transform:scaleX(0.8800);right:644px;transform-origin:100% 0;">0,00</div>
<div class="t" style="top:283px;transform:scaleX(0.8800);right:579px;transform-origin:100% 0;">573,65</div>
<div class="t" style="top:283px;transform:scaleX(0.8800);left:1245.5px;transform-origin:0 0;">1</div>
<div class="t" style="top:283px;transform:scaleX(0.8800);right:148px;transform-origin:100% 0;">110,00</div>
<div class="t" style="top:570px;transform:scaleX(0.8800);right:1130px;transform-origin:100% 0;">10</div>
<div class="t" style="top:570px;transform:scaleX(0.8800);right:1065px;transform-origin:100% 0;">6518,75</div>
<div class="t" style="top:570px;transform:scaleX(0.8800);right:1000px;transform-origin:100% 0;">0,00</div>
<div class="t" style="top:570px;transform:scaleX(0.8800);right:929px;transform-origin:100% 0;">6518,75</div>
<div class="t" style="top:570px;transform:scaleX(0.8800);right:864px;transform-origin:100% 0;">250,00</div>
<div class="t" style="top:570px;transform:scaleX(0.8800);right:793px;transform-origin:100% 0;">6518,75</div>
<div class="t" style="top:570px;transform:scaleX(0.8800);right:709px;transform-origin:100% 0;">6518,75</div>
<div class="t" style="top:570px;transform:scaleX(0.8800);right:644px;transform-origin:100% 0;">0,00</div>
<div class="t" style="top:570px;transform:scaleX(0.8800);right:579px;transform-origin:100% 0;">6518,75</div>
<div class="t" style="top:570px;transform:scaleX(0.8800);right:148px;transform-origin:100% 0;">250,00</div>
<div class="chk" style="left:1787px;top:228px;width:16px;height:358px;"></div>
<div class="sbtn" style="left:1787px;top:228px;width:16px;height:16px;"></div>
<svg style="left:1791px;top:234px" width="7" height="4"><path d="M3 0h1v1h1v1h1v1h1v1h-7v-1h1v-1h1v-1h1z" fill="#000" shape-rendering="crispEdges"/></svg>
<div class="sbtn" style="left:1787px;top:244px;width:16px;height:217px;"></div>
<div class="sbtn" style="left:1787px;top:570px;width:16px;height:16px;"></div>
<svg style="left:1791px;top:576px" width="7" height="4"><path d="M0 0h7v1h-1v1h-1v1h-1v1h-1v-1h-1v-1h-1v-1h-1z" fill="#000" shape-rendering="crispEdges"/></svg>
<div style="left:17px;top:592px;width:1792px;height:1px;background:#fff"></div>
<div class="sunk" style="left:21px;top:594px;width:249px;height:21px;background:#fff"></div>
<div class="t" style="top:599px;transform:scaleX(0.8651);left:24.5px;transform-origin:0 0;">&lt; Все группы &gt;</div>
<div class="sbtn" style="left:252px;top:596px;width:16px;height:17px;"></div>
<svg style="left:256px;top:602px" width="7" height="4"><path d="M0 0h7v1h-1v1h-1v1h-1v1h-1v-1h-1v-1h-1v-1h-1z" fill="#000" shape-rendering="crispEdges"/></svg>
<div class="t" style="top:599px;transform:scaleX(0.8694);left:520px;transform-origin:0 0;">Init: 0,297 сек.</div>
<div class="btn" style="left:1633px;top:592px;width:85px;height:25px;"></div>
<div class="btn" style="left:1724px;top:592px;width:85px;height:25px;"></div>
<div class="t" style="top:598px;transform:scaleX(0.8468);left:1658px;transform-origin:0 0;">Сохранить</div>
<div class="t" style="top:598px;transform:scaleX(0.8754);left:1745px;transform-origin:0 0;">Отменить</div>
<svg style="left:1637px;top:597px" width="13" height="14" viewBox="0 0 13 14"><path d="M1.500 8.500L4.500 12 10.500 1.500" fill="none" stroke="#4a9a10" stroke-width="2.200" stroke-linecap="round" stroke-linejoin="round"/></svg>
<svg style="left:1728px;top:597px" width="12" height="12" viewBox="0 0 12 12"><path d="M2 2l8 8M10 2l-8 8" stroke="#e0581c" stroke-width="2.600" stroke-linecap="round"/></svg>
<svg style="left:280px;top:598px" width="16" height="16" viewBox="0 0 16 16"><rect x="0.2" y="0.2" width="3.500" height="11" fill="#1490e0" stroke="#0f6cbc" stroke-width=".6"/><rect x="1.2" y="0.7" width="1.200" height="10" fill="#4cc4f4"/><rect x="0" y="11.300" width="4" height="3" fill="#f0a010"/><path d="M5 6L8.500 .700h7v9" fill="#fbe3cc" stroke="#d07a28" stroke-width="1"/><rect x="6.800" y="5" width="8.200" height="6.500" fill="#a8d0f8" stroke="#4a90e0" stroke-width=".8" transform="rotate(-8 11 8)"/><path d="M4.500 12.800h3.500M12.500 12.800h3.500M12.500 10.800h3" stroke="#f0a010" stroke-width="1"/><rect x="8.700" y="10.300" width="3" height="5.400" rx="1.200" fill="#fff" stroke="#d03c10" stroke-width="1.100"/></svg>
<svg style="left:305px;top:598px" width="16" height="16" viewBox="0 0 16 16"><rect x=".3" y=".5" width="3.400" height="13.500" fill="#9a9a9a" stroke="#787878" stroke-width=".5"/><rect x="1.200" y="1" width="1.300" height="12.500" fill="#c4c4c4"/><path d="M4.300 4L7 .700h8.800V6H4.300z" fill="#a4a4a4"/><path d="M5 4.5h11" stroke="#fff" stroke-width="1" stroke-dasharray="1 1"/><g transform="rotate(-9 11 11)"><rect x="6.8" y="7" width="8" height="8" fill="#dcdcdc" stroke="#7c7c7c" stroke-width="1"/><path d="M8.8 10h4M8.8 12h4" stroke="#8c8c8c" stroke-width="1"/></g></svg>
<svg style="left:330px;top:598px" width="16" height="16" viewBox="0 0 16 16"><rect x=".3" y=".5" width="3.400" height="13.500" fill="#9a9a9a" stroke="#787878" stroke-width=".5"/><rect x="1.200" y="1" width="1.300" height="12.500" fill="#c4c4c4"/><path d="M4.300 4L7 .700h8.800V4.5H4.300z" fill="#a4a4a4"/><path d="M5 2.5h11" stroke="#fff" stroke-width="1" stroke-dasharray="1 1"/><g transform="rotate(-9 11 11)"><rect x="7.3" y="5.5" width="8" height="8" fill="#dcdcdc" stroke="#7c7c7c" stroke-width="1"/><path d="M9.3 9h4M9.3 11.5h4" stroke="#8c8c8c" stroke-width="1"/></g></svg>
<svg style="left:355px;top:598px" width="16" height="16" viewBox="0 0 16 16"><rect x="0.2" y="0.5" width="3.500" height="13" fill="#1490e0" stroke="#0f6cbc" stroke-width=".6"/><rect x="1.2" y="1.0" width="1.200" height="12" fill="#4cc4f4"/><rect x="5.2" y="0.5" width="3.500" height="10" fill="#1490e0" stroke="#0f6cbc" stroke-width=".6"/><rect x="6.2" y="1.0" width="1.200" height="9" fill="#4cc4f4"/><rect x="10.2" y="0.5" width="3.500" height="9" fill="#1490e0" stroke="#0f6cbc" stroke-width=".6"/><rect x="11.2" y="1.0" width="1.200" height="8" fill="#4cc4f4"/><rect x="0.0" y="6" width="3.900" height="2.600" fill="#f0a010"/><rect x="1.4" y="6.8" width="1.200" height="1" fill="#ffe9a0"/><rect x="5.0" y="3" width="3.900" height="2.600" fill="#f0a010"/><rect x="6.4" y="3.8" width="1.200" height="1" fill="#ffe9a0"/><rect x="10.0" y="4.2" width="3.900" height="2.600" fill="#f0a010"/><rect x="11.399999999999999" y="5.0" width="1.200" height="1" fill="#ffe9a0"/><g transform="translate(4,10)"><rect x="3" y="0" width="7" height="2.500" fill="#f4b010" stroke="#c07c00" stroke-width=".5"/><rect x="6.500" y="2.500" width="5.500" height="2.300" fill="#f4b010" stroke="#c07c00" stroke-width=".5"/><rect x="0" y="3.300" width="7" height="2.600" fill="#f8b818" stroke="#c07c00" stroke-width=".5"/><path d="M1.500 4.600h4M4.500 1.200h4" stroke="#ffe9a0" stroke-width=".8"/></g></svg>
<svg style="left:380px;top:598px" width="16" height="16" viewBox="0 0 16 16"><rect x="8.500" y="1.500" width="7" height="9" fill="#d8f0d0" stroke="#3a9a28" stroke-width="1"/><path d="M12.500 4v.1M12.500 6v.1M12.500 8v.1" stroke="#3a9a28" stroke-width="1.200" stroke-linecap="square"/><g transform="translate(4.2,0.2) rotate(20)"><rect x="0" y="0" width="7.500" height="9" fill="#8ecbf8" stroke="#2a88e0" stroke-width=".9"/><path d="M1.500 2.500h4.500M1.500 4.500h4.500M1.500 6.500h4.500" stroke="#e8f6ff" stroke-width=".9"/></g><g transform="translate(4,10)"><rect x="3" y="0" width="7" height="2.500" fill="#f4b010" stroke="#c07c00" stroke-width=".5"/><rect x="6.500" y="2.500" width="5.500" height="2.300" fill="#f4b010" stroke="#c07c00" stroke-width=".5"/><rect x="0" y="3.300" width="7" height="2.600" fill="#f8b818" stroke="#c07c00" stroke-width=".5"/><path d="M1.500 4.600h4M4.500 1.200h4" stroke="#ffe9a0" stroke-width=".8"/></g></svg>
<svg style="left:405px;top:598px" width="16" height="16" viewBox="0 0 16 16"><rect x="0.8" y="1.2" width="3.500" height="13.2" fill="#1490e0" stroke="#0f6cbc" stroke-width=".6"/><rect x="1.8" y="1.7" width="1.200" height="12.2" fill="#4cc4f4"/><rect x="5.9" y="1.2" width="3.500" height="13.2" fill="#1490e0" stroke="#0f6cbc" stroke-width=".6"/><rect x="6.9" y="1.7" width="1.200" height="12.2" fill="#4cc4f4"/><rect x="11" y="1.2" width="3.500" height="13.2" fill="#1490e0" stroke="#0f6cbc" stroke-width=".6"/><rect x="12" y="1.7" width="1.200" height="12.2" fill="#4cc4f4"/><rect x="0.6000000000000001" y="7" width="3.900" height="2.600" fill="#f0a010"/><rect x="2.0" y="7.8" width="1.200" height="1" fill="#ffe9a0"/><rect x="5.7" y="4.2" width="3.900" height="2.600" fill="#f0a010"/><rect x="7.1000000000000005" y="5.0" width="1.200" height="1" fill="#ffe9a0"/><rect x="10.8" y="5.2" width="3.900" height="2.600" fill="#f0a010"/><rect x="12.2" y="6.0" width="1.200" height="1" fill="#ffe9a0"/></svg>
<svg style="left:430px;top:598px" width="16" height="16" viewBox="0 0 16 16"><rect x="8.500" y="1.500" width="7" height="9" fill="#d8f0d0" stroke="#3a9a28" stroke-width="1"/><path d="M12.500 4v.1M12.500 6v.1M12.500 8v.1" stroke="#3a9a28" stroke-width="1.200" stroke-linecap="square"/><rect x="5" y="7.500" width="7.500" height="8" fill="#88a8ec" stroke="#4468d0" stroke-width=".9" transform="rotate(-12 9 11)"/><g transform="translate(4.2,0.2) rotate(20)"><rect x="0" y="0" width="7.500" height="9" fill="#8ecbf8" stroke="#2a88e0" stroke-width=".9"/><path d="M1.500 2.500h4.500M1.500 4.500h4.500M1.500 6.500h4.500" stroke="#e8f6ff" stroke-width=".9"/></g></svg>
<svg style="left:455px;top:598px" width="16" height="16" viewBox="0 0 16 16"><path d="M.700 4.500L4 .800h9.500v9H.700z" fill="#f8d4b0" stroke="#d07a28" stroke-width="1"/><path d="M.700 4.500h9.500L13.500 .800" fill="none" stroke="#d07a28" stroke-width=".8"/><rect x="3.500" y="5.500" width="12" height="10" rx="1.500" fill="#d8f2fc" stroke="#1a8cc8" stroke-width="1.300"/><rect x="5.500" y="7.300" width="8" height="2.200" fill="#80e060" stroke="#1a5c90" stroke-width=".6"/><path d="M5.500 11.500h8.500M5.500 13.500h8.500" stroke="#2a5cb0" stroke-width="1" stroke-dasharray="1 .800"/></svg>
</body></html>
